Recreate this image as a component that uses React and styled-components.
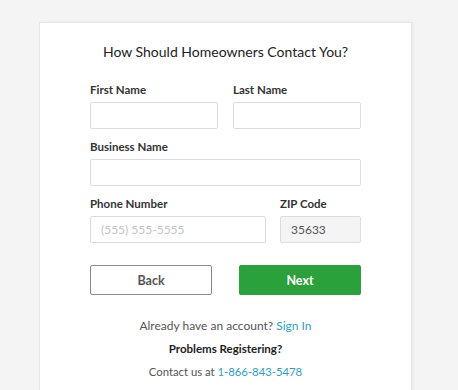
import React from "react";
import styled, { createGlobalStyle } from "styled-components";

const GlobalStyle = createGlobalStyle`
  html, body {
    margin: 0;
    padding: 0;
    background: #f4f4f4;
    font-family: "Lato", "Open Sans", Arial, sans-serif;
  }
`;

const Page = styled.div`
  padding: 22px 46px 0 39px;
  height: 390px;
  box-sizing: border-box;
  overflow: hidden;
`;

const Card = styled.div`
  background: #fff;
  border: 1px solid #e6e6e6;
  border-bottom: none;
  box-shadow: 1px 0 3px rgba(0, 0, 0, 0.06);
  padding: 19px 50px 20px;
  min-height: 400px;
  box-sizing: border-box;
`;

const Title = styled.h1`
  margin: 0 0 20px;
  font-size: 14px;
  line-height: 20px;
  font-weight: 400;
  color: #222;
  text-align: center;
  white-space: nowrap;
`;

const Row = styled.div`
  display: grid;
  grid-template-columns: ${(p) => p.$cols || "1fr"};
  column-gap: ${(p) => p.$gap || 15}px;
  margin-bottom: 10px;
`;

const Group = styled.div`
  display: flex;
  flex-direction: column;
  gap: 4px;
`;

const Label = styled.label`
  font-size: 11.5px;
  line-height: 16px;
  font-weight: 700;
  color: #333;
`;

const Input = styled.input`
  box-sizing: border-box;
  height: 27px;
  width: 100%;
  border: 1px solid #dcdcdc;
  border-radius: 2px;
  padding: 0 10px;
  font-family: inherit;
  font-size: 12px;
  color: #555;
  background: ${(p) => (p.readOnly ? "#f4f4f4" : "#fff")};
  outline: none;

  &::placeholder {
    color: #c4c4c4;
  }
`;

const Buttons = styled.div`
  display: grid;
  grid-template-columns: 1fr 1fr;
  column-gap: 27px;
  margin-top: 22px;
  margin-bottom: 22px;
`;

const Button = styled.button`
  height: 30px;
  border-radius: 2px;
  font-family: inherit;
  font-size: 12.5px;
  font-weight: 700;
  cursor: pointer;
  border: 1px solid ${(p) => (p.$primary ? "#2aa13b" : "#8a8a8a")};
  background: ${(p) => (p.$primary ? "#2aa13b" : "#fff")};
  color: ${(p) => (p.$primary ? "#fff" : "#555")};
`;

const Note = styled.p`
  margin: 0 0 5px;
  text-align: center;
  font-size: ${(p) => p.$size || 12}px;
  line-height: 18px;
  color: #555;
  font-weight: ${(p) => (p.$strong ? 700 : 400)};
  ${(p) => p.$strong && "color: #222;"}
`;

const Link = styled.a`
  color: #2a9fc4;
  text-decoration: none;
`;

export default function App() {
  return (
    <>
      <GlobalStyle />
      <Page>
        <Card>
          <Title>How Should Homeowners Contact You?</Title>
          <Row $cols="1fr 1fr">
            <Group>
              <Label>First Name</Label>
              <Input type="text" />
            </Group>
            <Group>
              <Label>Last Name</Label>
              <Input type="text" />
            </Group>
          </Row>
          <Row>
            <Group>
              <Label>Business Name</Label>
              <Input type="text" />
            </Group>
          </Row>
          <Row $cols="1fr 81px" $gap={14}>
            <Group>
              <Label>Phone Number</Label>
              <Input type="tel" placeholder="(555) 555-5555" />
            </Group>
            <Group>
              <Label>ZIP Code</Label>
              <Input type="text" value="35633" readOnly />
            </Group>
          </Row>
          <Buttons>
            <Button type="button">Back</Button>
            <Button type="button" $primary>
              Next
            </Button>
          </Buttons>
          <Note>
            Already have an account? <Link href="#">Sign In</Link>
          </Note>
          <Note $strong $size={11.5}>
            Problems Registering?
          </Note>
          <Note $size={11.3}>
            Contact us at <Link href="#">1-866-843-5478</Link>
          </Note>
        </Card>
      </Page>
    </>
  );
}
